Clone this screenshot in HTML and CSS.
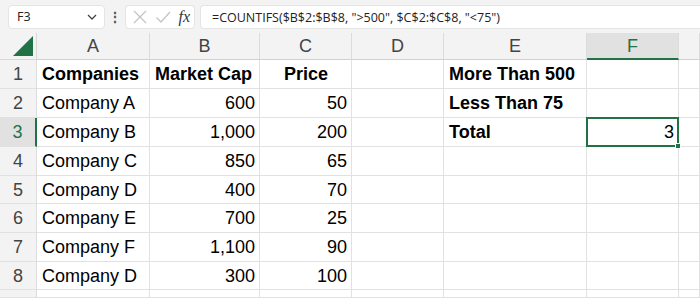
FILE: index.html
```html
<!DOCTYPE html>
<html lang="en">
<head>
    <meta charset="UTF-8">
    <title>COUNTIFS - Sheet</title>
    <link rel="stylesheet" href="styles.css">
</head>
<body>
    <div class="formula-bar">
        <div class="name-box">
            <span>F3</span>
            <svg class="chevron" width="12" height="8" viewBox="0 0 12 8"><path d="M2 2 L6 6 L10 2" fill="none" stroke="#444" stroke-width="1.3"/></svg>
        </div>
        <div class="dots">⋮</div>
        <div class="fx-box">
            <svg width="16" height="16" viewBox="0 0 16 16"><path d="M2 2 L14 14 M14 2 L2 14" stroke="#c4c4c4" stroke-width="1.3"/></svg>
            <svg width="16" height="16" viewBox="0 0 16 16"><path d="M1.5 8.5 L6 13 L15 3" fill="none" stroke="#c4c4c4" stroke-width="1.3"/></svg>
            <span class="fx">fx</span>
        </div>
        <div class="formula">=COUNTIFS($B$2:$B$8, "&gt;500", $C$2:$C$8, "&lt;75")</div>
    </div>

    <div class="sheet">
        <div class="corner"><div class="tri"></div></div>
        <div class="col-head">A</div>
        <div class="col-head">B</div>
        <div class="col-head">C</div>
        <div class="col-head">D</div>
        <div class="col-head">E</div>
        <div class="col-head active">F</div>
        <div class="col-head"></div>

        <div class="row-head">1</div>
        <div class="cell bold">Companies</div>
        <div class="cell bold">Market Cap</div>
        <div class="cell bold center">Price</div>
        <div class="cell"></div>
        <div class="cell bold">More Than 500</div>
        <div class="cell"></div>
        <div class="cell"></div>

        <div class="row-head">2</div>
        <div class="cell">Company A</div>
        <div class="cell num">600</div>
        <div class="cell num">50</div>
        <div class="cell"></div>
        <div class="cell bold">Less Than 75</div>
        <div class="cell"></div>
        <div class="cell"></div>

        <div class="row-head active">3</div>
        <div class="cell">Company B</div>
        <div class="cell num">1,000</div>
        <div class="cell num">200</div>
        <div class="cell"></div>
        <div class="cell bold">Total</div>
        <div class="cell num selected">3<span class="handle"></span></div>
        <div class="cell"></div>

        <div class="row-head">4</div>
        <div class="cell">Company C</div>
        <div class="cell num">850</div>
        <div class="cell num">65</div>
        <div class="cell"></div>
        <div class="cell"></div>
        <div class="cell"></div>
        <div class="cell"></div>

        <div class="row-head">5</div>
        <div class="cell">Company D</div>
        <div class="cell num">400</div>
        <div class="cell num">70</div>
        <div class="cell"></div>
        <div class="cell"></div>
        <div class="cell"></div>
        <div class="cell"></div>

        <div class="row-head">6</div>
        <div class="cell">Company E</div>
        <div class="cell num">700</div>
        <div class="cell num">25</div>
        <div class="cell"></div>
        <div class="cell"></div>
        <div class="cell"></div>
        <div class="cell"></div>

        <div class="row-head">7</div>
        <div class="cell">Company F</div>
        <div class="cell num">1,100</div>
        <div class="cell num">90</div>
        <div class="cell"></div>
        <div class="cell"></div>
        <div class="cell"></div>
        <div class="cell"></div>

        <div class="row-head">8</div>
        <div class="cell">Company D</div>
        <div class="cell num">300</div>
        <div class="cell num">100</div>
        <div class="cell"></div>
        <div class="cell"></div>
        <div class="cell"></div>
        <div class="cell"></div>

        <div class="row-head"></div>
        <div class="cell"></div>
        <div class="cell"></div>
        <div class="cell"></div>
        <div class="cell"></div>
        <div class="cell"></div>
        <div class="cell"></div>
        <div class="cell"></div>
    </div>
</body>
</html>
```

FILE: styles.css
```css
* {
    margin: 0;
    padding: 0;
    box-sizing: border-box;
}

body {
    font-family: 'Liberation Sans', Arial, sans-serif;
    background: #f3f3f3;
    width: 700px;
    height: 298px;
    overflow: hidden;
}

.formula-bar {
    display: flex;
    align-items: center;
    height: 33px;
    padding: 3px 0 3px 8px;
    gap: 0;
}

.name-box {
    display: flex;
    align-items: center;
    justify-content: space-between;
    width: 97px;
    height: 24px;
    background: white;
    border: 1px solid #e4e4e4;
    border-radius: 4px;
    padding: 0 6px 0 8px;
    font-family: 'Open Sans', sans-serif;
    font-size: 12.5px;
    color: #222;
}

.dots {
    width: 20px;
    text-align: center;
    font-size: 14px;
    font-weight: bold;
    color: #555;
}

.fx-box {
    display: flex;
    align-items: center;
    justify-content: space-between;
    width: 70px;
    height: 24px;
    background: white;
    border: 1px solid #e4e4e4;
    border-radius: 4px;
    padding: 0 4px 0 6px;
}

.fx {
    font-family: 'Liberation Serif', serif;
    font-style: italic;
    font-size: 16px;
    color: #333;
}

.formula {
    flex: 1;
    height: 24px;
    margin-left: 5px;
    background: white;
    border: 1px solid #e4e4e4;
    border-right: none;
    border-radius: 4px 0 0 4px;
    padding: 3px 0 0 11px;
    font-family: 'Open Sans', sans-serif;
    font-size: 12.5px;
    color: #222;
}

.sheet {
    display: grid;
    grid-template-columns: 37px 113px 110px 92px 92px 143px 92px 21px;
    grid-template-rows: 27px 29px 29px 29px 29px 28px 29px 29px 28px 8px;
    background: white;
}

.corner {
    background: #f3f3f3;
    border-right: 1px solid #d8d8d8;
    border-bottom: 1px solid #d8d8d8;
    position: relative;
}

.tri {
    position: absolute;
    right: 3px;
    bottom: 3px;
    width: 0;
    height: 0;
    border-left: 20px solid transparent;
    border-bottom: 20px solid #217346;
}

.col-head {
    background: #f3f3f3;
    border-right: 1px solid #dcdcdc;
    border-bottom: 1px solid #d0d0d0;
    text-align: center;
    font-size: 18px;
    line-height: 26px;
    color: #444;
}

.col-head.active {
    background: #e1e1e1;
    color: #217346;
    border-bottom: 2px solid #217346;
}

.row-head {
    background: #f3f3f3;
    border-right: 1px solid #dcdcdc;
    border-bottom: 1px solid #e1e1e1;
    text-align: center;
    font-size: 18px;
    line-height: 28px;
    color: #444;
}

.row-head.active {
    background: #e1e1e1;
    color: #217346;
    border-right: 2px solid #217346;
}

.cell {
    border-right: 1px solid #e1e1e1;
    border-bottom: 1px solid #e1e1e1;
    padding: 0 4px 0 5px;
    font-size: 18px;
    line-height: 28px;
    color: #000;
    white-space: nowrap;
    overflow: visible;
}

.bold {
    font-weight: bold;
}

.center {
    text-align: center;
}

.num {
    text-align: right;
}

.selected {
    position: relative;
    border: 2px solid #217346;
    margin: -1px 0 0 -1px;
    line-height: 27px;
    padding-right: 3px;
}

.handle {
    position: absolute;
    right: -4px;
    bottom: -4px;
    width: 6px;
    height: 6px;
    background: #217346;
    border: 1px solid white;
}
```
